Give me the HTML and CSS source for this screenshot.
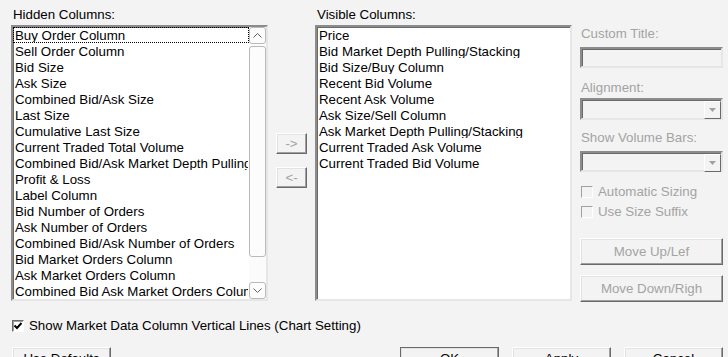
FILE: index.html
```html
<!DOCTYPE html>
<html lang="en">
<head>
    <meta charset="UTF-8">
    <title>Columns</title>
    <link rel="stylesheet" href="styles.css">
</head>
<body>
    <div class="dialog">
        <div class="top">
            <div class="panel">
                <div class="label">Hidden Columns:</div>
                <div class="listbox">
                    <ul class="items">
                        <li class="focus">Buy Order Column</li>
                        <li>Sell Order Column</li>
                        <li>Bid Size</li>
                        <li>Ask Size</li>
                        <li>Combined Bid/Ask Size</li>
                        <li>Last Size</li>
                        <li>Cumulative Last Size</li>
                        <li>Current Traded Total Volume</li>
                        <li>Combined Bid/Ask Market Depth Pulling/Stacking</li>
                        <li>Profit &amp; Loss</li>
                        <li>Label Column</li>
                        <li>Bid Number of Orders</li>
                        <li>Ask Number of Orders</li>
                        <li>Combined Bid/Ask Number of Orders</li>
                        <li>Bid Market Orders Column</li>
                        <li>Ask Market Orders Column</li>
                        <li>Combined Bid Ask Market Orders Column</li>
                    </ul>
                    <div class="scrollbar">
                        <div class="sb-btn">
                            <svg width="9" height="5" viewBox="0 0 9 5"><path d="M0.5 4.5 L4.5 0.5 L8.5 4.5" fill="none" stroke="#606060" stroke-width="1"/></svg>
                        </div>
                        <div class="sb-thumb"></div>
                        <div class="sb-btn">
                            <svg width="9" height="5" viewBox="0 0 9 5"><path d="M0.5 0.5 L4.5 4.5 L8.5 0.5" fill="none" stroke="#606060" stroke-width="1"/></svg>
                        </div>
                    </div>
                </div>
            </div>

            <div class="mover">
                <div class="btn disabled small">-&gt;</div>
                <div class="btn disabled small">&lt;-</div>
            </div>

            <div class="panel">
                <div class="label">Visible Columns:</div>
                <div class="listbox">
                    <ul class="items">
                        <li>Price</li>
                        <li>Bid Market Depth Pulling/Stacking</li>
                        <li>Bid Size/Buy Column</li>
                        <li>Recent Bid Volume</li>
                        <li>Recent Ask Volume</li>
                        <li>Ask Size/Sell Column</li>
                        <li>Ask Market Depth Pulling/Stacking</li>
                        <li>Current Traded Ask Volume</li>
                        <li>Current Traded Bid Volume</li>
                    </ul>
                </div>
            </div>

            <div class="props">
                <div class="label dim first">Custom Title:</div>
                <div class="field input"></div>
                <div class="label dim gap-a">Alignment:</div>
                <div class="field select align">
                    <div class="drop"><svg width="7" height="4" viewBox="0 0 7 4"><path d="M0 0 L7 0 L3.5 4 Z" fill="#a0a0a0"/></svg></div>
                </div>
                <div class="label dim gap-b">Show Volume Bars:</div>
                <div class="field select bars">
                    <div class="drop"><svg width="7" height="4" viewBox="0 0 7 4"><path d="M0 0 L7 0 L3.5 4 Z" fill="#a0a0a0"/></svg></div>
                </div>
                <div class="check-row dim row-a"><span class="checkbox off"></span>Automatic Sizing</div>
                <div class="check-row dim row-b"><span class="checkbox off"></span>Use Size Suffix</div>
                <div class="btn disabled wide up">Move Up/Lef</div>
                <div class="btn disabled wide down">Move Down/Righ</div>
            </div>
        </div>

        <div class="check-row main-check">
            <span class="checkbox">
                <svg width="8" height="8" viewBox="0 0 8 8"><path d="M0.5 3.5 L3 6 L7.5 1" fill="none" stroke="#000" stroke-width="2"/></svg>
            </span>Show Market Data Column Vertical Lines (Chart Setting)
        </div>

        <div class="buttons">
            <div class="btn bottom">Use Defaults</div>
            <div class="group">
                <div class="btn bottom default">OK</div>
                <div class="btn bottom">Apply</div>
                <div class="btn bottom">Cancel</div>
            </div>
        </div>
    </div>
</body>
</html>
```

FILE: styles.css
```css
html, body {
    margin: 0;
    padding: 0;
}
body {
    width: 728px;
    height: 357px;
    overflow: hidden;
    background-color: #f3f3f3;
    color: #000;
    font-family: "Liberation Sans", Arial, sans-serif;
    font-size: 13.3px;
    line-height: 16px;
}
.dialog {
    padding: 7px 5px 0 11px;
}
.top {
    display: flex;
    gap: 8px;
}
.panel {
    width: 257px;
}
.label {
    height: 16px;
    padding-left: 2px;
    white-space: nowrap;
}
.dim {
    color: #a3a3a3;
}
.listbox {
    box-sizing: border-box;
    margin-top: 2px;
    height: 276px;
    display: flex;
    background: #fff;
    border: 2px solid;
    border-color: #8c8c8c #e6e6e6 #e6e6e6 #8c8c8c;
    box-shadow: inset 1px 1px #6a6a6a;
}
.items {
    flex: 1;
    min-width: 0;
    margin: 0;
    padding: 0;
    list-style: none;
}
.items li {
    height: 14px;
    line-height: 16px;
    padding: 0 0 0 1px;
    border: 1px solid transparent;
    white-space: nowrap;
    overflow: hidden;
}
.items li.focus {
    border: 1px dotted #000;
}
.scrollbar {
    width: 17px;
    display: flex;
    flex-direction: column;
    background: #fbfbfb;
}
.sb-btn {
    box-sizing: border-box;
    height: 17px;
    border: 1px solid #b9b9b9;
    border-radius: 3px;
    background: #fcfcfc;
    display: flex;
    align-items: center;
    justify-content: center;
}
.sb-thumb {
    flex: 1;
    margin: 2px 0 25px;
    border: 1px solid #b9b9b9;
    border-radius: 3px;
    background: #fcfcfc;
}
.mover {
    width: 31px;
    margin-top: 126px;
    display: flex;
    flex-direction: column;
    gap: 13px;
}
.btn {
    box-sizing: border-box;
    display: flex;
    align-items: center;
    justify-content: center;
    white-space: nowrap;
    overflow: hidden;
    background: #f3f3f3;
    border: 1px solid;
    border-color: #fff #6a6a6a #6a6a6a #fff;
    box-shadow: inset -1px -1px #a0a0a0, inset 1px 1px #e3e3e3;
}
.btn.disabled {
    color: #a3a3a3;
}
.btn.small {
    height: 21px;
}
.props {
    width: 143px;
}
.props .label {
    padding-left: 1px;
}
.first { margin-top: 19px; }
.gap-a { margin-top: 12px; }
.gap-b { margin-top: 10px; }
.field {
    box-sizing: border-box;
    border: 2px solid;
    border-color: #8c8c8c #e6e6e6 #e6e6e6 #8c8c8c;
    box-shadow: inset 1px 1px #6a6a6a;
    background: #f3f3f3;
}
.input {
    margin-top: 5px;
    height: 21px;
}
.select {
    display: flex;
    justify-content: flex-end;
    padding: 1px 0 0;
}
.align {
    margin-top: 2px;
    height: 22px;
}
.bars {
    margin-top: 5px;
    height: 21px;
}
.drop {
    box-sizing: border-box;
    width: 17px;
    height: 18px;
    border: 1px solid;
    border-color: #fff #6a6a6a #6a6a6a #fff;
    background: #f3f3f3;
    display: flex;
    align-items: center;
    justify-content: center;
}
.check-row {
    display: flex;
    align-items: center;
    height: 16px;
    white-space: nowrap;
}
.checkbox {
    box-sizing: border-box;
    width: 12px;
    height: 12px;
    margin-right: 5px;
    border: 1px solid;
    border-color: #6a6a6a #fff #fff #6a6a6a;
    box-shadow: inset 1px 1px #a0a0a0;
    background: #fff;
    display: flex;
    align-items: center;
    justify-content: center;
}
.checkbox.off {
    background: #f3f3f3;
    border-color: #a0a0a0 #fff #fff #a0a0a0;
    box-shadow: none;
}
.props .check-row {
    padding-left: 1px;
}
.row-a { margin-top: 12px; }
.row-b { margin-top: 4px; }
.btn.wide {
    height: 27px;
}
.up { margin-top: 18px; }
.down { margin-top: 10px; }
.main-check {
    margin-top: 16px;
    padding-left: 1px;
}
.buttons {
    display: flex;
    justify-content: space-between;
    margin-top: 13px;
    padding-left: 1px;
}
.group {
    display: flex;
    gap: 13px;
}
.btn.bottom {
    width: 99px;
    height: 24px;
    align-items: flex-start;
    padding-top: 3px;
}
.btn.default {
    border-color: #6a6a6a;
}
```
